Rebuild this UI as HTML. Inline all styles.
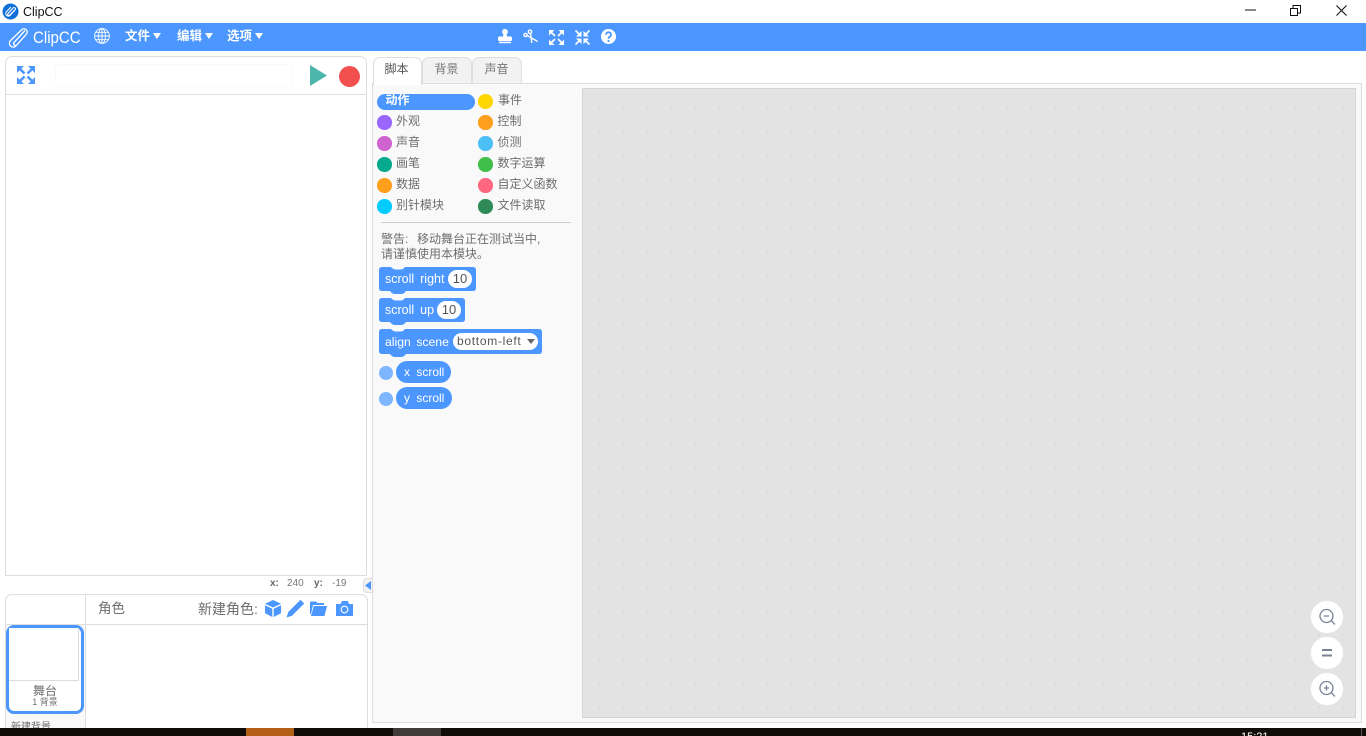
<!DOCTYPE html>
<html lang="zh"><head><meta charset="utf-8"><title>ClipCC</title>
<style>
html,body{margin:0;padding:0;width:1366px;height:736px;overflow:hidden;background:#fff}
body{position:relative;font-family:"Liberation Sans","Noto Sans CJK SC",sans-serif;font-size:12px;color:#6e6e6e}
.a{position:absolute;box-sizing:border-box}
.t{position:absolute;white-space:nowrap;line-height:16px}
.c{position:absolute;width:14.500px;height:14.500px;border-radius:50%}
svg{position:absolute;overflow:visible}
.m{position:absolute;top:28px;color:#fff;font-size:12.500px;font-weight:bold;line-height:16px;white-space:nowrap}
.ar{display:inline-block;width:0;height:0;border-left:4.500px solid transparent;border-right:4.500px solid transparent;border-top:6px solid #fff;margin-left:3px;vertical-align:1px}
.tab{position:absolute;box-sizing:border-box;top:57px;height:26px;width:50px;border:1px solid #ddd;border-bottom:none;border-radius:7px 7px 0 0;background:#f2f2f2;text-align:center;line-height:22px;color:#777;padding-right:1px}
</style></head><body>

<!-- title bar -->
<svg style="left:2px;top:3px" width="17" height="17" viewBox="0 0 17 17"><circle cx="8.500" cy="8.500" r="8" fill="#0f6fd8"/><path d="M11.500 4.500L6 10.500a1.200 1.200 0 0 0 1.700 1.700L12.700 7" fill="none" stroke="#fff" stroke-width="1.100"/><path d="M11.500 4.500a1.700 1.700 0 0 1 2 2L8 12.500a2.600 2.600 0 0 1-3.800-3.500L9 4" fill="none" stroke="#fff" stroke-width="1"/></svg>
<div class="t" style="left:23px;top:4px;color:#111;font-size:12.500px">ClipCC</div>
<svg style="left:1245px;top:9px" width="12" height="2"><path d="M0 1H11" stroke="#111" stroke-width="1"/></svg>
<svg style="left:1290px;top:5px" width="11" height="11"><path d="M.5 3.500H7.500V10.500H.5ZM3 3.500V.5H10.500V8H7.500" fill="none" stroke="#111" stroke-width="1"/></svg>
<svg style="left:1336px;top:5px" width="11" height="11"><path d="M.5 .5L10.500 10.500M10.500 .5L.5 10.500" stroke="#111" stroke-width="1.100"/></svg>

<!-- menu bar -->
<div class="a" style="left:0;top:23px;width:1366px;height:28px;background:#4c97ff"></div>
<svg style="left:8px;top:27px" width="20" height="22" viewBox="0 0 20 22"><path d="M17 3.500L6 15.500a1.900 1.900 0 0 0 2.700 2.600L18.500 7a3.200 3.200 0 0 0-4.500-4.500L2.500 13.500a3.800 3.800 0 0 0 5.500 5.500" fill="none" stroke="#fff" stroke-width="1.300"/></svg>
<div class="t" style="left:33px;top:27px;color:#fff;font-size:17px;line-height:22px;transform:scaleX(.885);transform-origin:left center">ClipCC</div>
<svg style="left:94px;top:28px" width="16" height="16" viewBox="0 0 16 16" fill="none" stroke="#fff" stroke-width=".9"><circle cx="8" cy="8" r="7.400"/><ellipse cx="8" cy="8" rx="3.400" ry="7.400"/><path d="M8 .6V15.400M.6 8H15.400M1.700 4.300H14.300M1.700 11.700H14.300"/></svg>
<div class="m" style="left:125px">文件<span class="ar"></span></div>
<div class="m" style="left:177px">编辑<span class="ar"></span></div>
<div class="m" style="left:227px">选项<span class="ar"></span></div>

<!-- toolbar icons -->
<svg style="left:497px;top:28px" width="16" height="16" viewBox="0 0 16 16" fill="#fff"><circle cx="8" cy="3.800" r="2.900"/><path d="M6.500 5.500h3l.6 3.500H5.900z"/><rect x="1" y="8.500" width="14" height="4.600" rx="1.500"/><rect x="2" y="13.800" width="12" height="1.400"/></svg>
<svg style="left:523px;top:29px" width="16" height="15" viewBox="0 0 16 15" fill="none" stroke="#fff" stroke-width="1.400"><circle cx="2.600" cy="6" r="1.600"/><circle cx="7" cy="2.800" r="1.700"/><path d="M4.300 6.500L14.600 12.500M7.600 4.800L8.800 14"/></svg>
<svg style="left:549px;top:29.500px" width="15" height="15" viewBox="0 0 15 15"><g fill="#fff"><path d="M0 0H5.500L0 5.500ZM15 0V5.500L9.500 0ZM0 15V9.500L5.500 15ZM15 15H9.500L15 9.500Z"/></g><path d="M2 2L6 6M13 2L9 6M2 13L6 9M13 13L9 9" stroke="#fff" stroke-width="1.600"/></svg>
<svg style="left:575px;top:29.500px" width="15" height="15" viewBox="0 0 15 15"><g fill="#fff"><path d="M6.500 6.500H1L6.500 1ZM8.500 6.500V1L14 6.500ZM6.500 8.500V14L1 8.500ZM8.500 8.500H14L8.500 14Z"/></g><path d="M.5 .5L4 4M14.500 .5L11 4M.5 14.500L4 11M14.500 14.500L11 11" stroke="#fff" stroke-width="1.600"/></svg>
<svg style="left:601px;top:29px" width="15" height="15" viewBox="0 0 15 15"><circle cx="7.500" cy="7.500" r="7.500" fill="#fff"/><path d="M5 5.600a2.500 2.400 0 1 1 3.800 2.100c-.9.500-1.300 1-1.300 2" fill="none" stroke="#4c97ff" stroke-width="1.800"/><circle cx="7.500" cy="12" r="1.100" fill="#4c97ff"/></svg>

<!-- stage panel -->
<div class="a" style="left:5px;top:56px;width:362px;height:520px;border:1px solid #ddd;border-radius:7px 7px 0 0;background:#fff"></div>
<div class="a" style="left:6px;top:94px;width:360px;height:1px;background:#ddd"></div>
<div class="a" style="left:55px;top:64px;width:238px;height:23px;border:1px solid #fafafe;border-radius:4px"></div>
<svg style="left:17px;top:66px" width="18" height="18" viewBox="0 0 18 18"><g fill="#4c97ff"><path d="M0 0H7L0 7ZM18 0V7L11 0ZM0 18V11L7 18ZM18 18H11L18 11Z"/></g><path d="M2 2L7.500 7.500M16 2L10.500 7.500M2 16L7.500 10.500M16 16L10.500 10.500" stroke="#4c97ff" stroke-width="2.600"/></svg>
<svg style="left:310px;top:65px" width="17" height="21"><path d="M0 0L17 10.500 0 21Z" fill="#4db6ac"/></svg>
<div class="a" style="left:339px;top:66px;width:21px;height:21px;border-radius:50%;background:#f25050"></div>

<!-- coords -->
<div class="t" style="left:270px;top:576px;font-size:10px;font-weight:bold;color:#666">x:</div>
<div class="t" style="left:287px;top:576px;font-size:10px;color:#777">240</div>
<div class="t" style="left:314px;top:576px;font-size:10px;font-weight:bold;color:#666">y:</div>
<div class="t" style="left:332px;top:576px;font-size:10px;color:#777">-19</div>
<div class="a" style="left:363px;top:578px;width:10px;height:15px;background:#f2f2f2;border:1px solid #ddd;border-right:none;border-radius:4px 0 0 4px"></div>
<svg style="left:365px;top:581px" width="6" height="9"><path d="M0 4.500L6 0V9Z" fill="#4c97ff"/></svg>

<!-- sprite panel -->
<div class="a" style="left:5px;top:594px;width:363px;height:140px;border:1px solid #ddd;border-radius:7px 7px 0 0;background:#fff"></div>
<div class="a" style="left:6px;top:625px;width:79px;height:103px;background:#f9f9f9"></div>
<div class="a" style="left:85px;top:595px;width:1px;height:133px;background:#ddd"></div>
<div class="a" style="left:6px;top:624px;width:361px;height:1px;background:#ddd"></div>
<div class="t" style="left:98px;top:601px;font-size:13.500px">角色</div>
<div class="t" style="left:198px;top:601px;font-size:14px">新建角色:</div>
<svg style="left:265px;top:600px" width="16" height="17" viewBox="0 0 16 17" fill="#4c97ff"><path d="M8 0L16 3.800 8 7.500 0 3.800Z"/><path d="M0 5.200L7.300 8.700V17L0 13.200ZM16 5.200L8.700 8.700V17L16 13.200Z"/></svg>
<svg style="left:286px;top:599px" width="19" height="19" viewBox="0 0 19 19" fill="#4c97ff"><path d="M14.500 .8L18.200 4.500 6 16.700 .5 18.500 2.300 13Z"/></svg>
<svg style="left:310px;top:601px" width="17" height="15" viewBox="0 0 17 15" fill="#4c97ff"><path d="M0 1.500Q0 .5 1 .5H6L7.500 2H14V4H3L1 13 0 13Z"/><path d="M3.800 5H17L14.500 15H1Z"/></svg>
<svg style="left:336px;top:601px" width="17" height="15" viewBox="0 0 17 15"><path d="M0 3H4.500L6 0H12L13 3H17V15H0Z" fill="#4c97ff"/><circle cx="8.500" cy="8.500" r="3.300" fill="none" stroke="#fff" stroke-width="1.100"/></svg>
<div class="a" style="left:6px;top:625px;width:78px;height:89px;border:3px solid #4c97ff;border-radius:8px;background:#fff"></div>
<div class="a" style="left:9px;top:628px;width:70px;height:53px;border:1px solid #ddd;border-top:none;border-left:none;background:#fff"></div>
<div class="t" style="left:6px;top:683px;width:78px;text-align:center;font-size:12px">舞台</div>
<div class="t" style="left:6px;top:696px;width:78px;text-align:center;font-size:9px;line-height:13px">1 背景</div>
<div class="t" style="left:11px;top:720px;font-size:10px">新建背景</div>

<!-- tabs -->
<div class="tab" style="left:422px">背景</div>
<div class="tab" style="left:472px">声音</div>
<div class="a" style="left:372px;top:83px;width:990px;height:640px;border:1px solid #ddd;background:#f9f9f9"></div>
<div class="tab" style="left:373px;width:49px;height:28px;background:#fff;color:#555;z-index:2;padding-right:2px">脚本</div>

<!-- palette -->
<div class="a" style="left:377px;top:94px;width:98px;height:16px;border-radius:8px;background:#4c97ff"></div>
<div class="t" style="left:385.500px;top:92px;color:#fff;font-weight:bold">动作</div>
<div class="c" style="left:377px;top:115px;background:#9966ff"></div><div class="t" style="left:396px;top:113px">外观</div>
<div class="c" style="left:377px;top:136px;background:#cf63cf"></div><div class="t" style="left:396px;top:134px">声音</div>
<div class="c" style="left:377px;top:157px;background:#05a98d"></div><div class="t" style="left:396px;top:155px">画笔</div>
<div class="c" style="left:377px;top:178px;background:#ff9f1c"></div><div class="t" style="left:396px;top:176px">数据</div>
<div class="c" style="left:377px;top:199px;background:#00ccff"></div><div class="t" style="left:396px;top:197px">别针模块</div>
<div class="c" style="left:478px;top:94px;background:#ffd500"></div><div class="t" style="left:498px;top:92px">事件</div>
<div class="c" style="left:478px;top:115px;background:#ff9f1c"></div><div class="t" style="left:497.500px;top:113px">控制</div>
<div class="c" style="left:478px;top:136px;background:#4cbff5"></div><div class="t" style="left:497.500px;top:134px">侦测</div>
<div class="c" style="left:478px;top:157px;background:#40bf4a"></div><div class="t" style="left:497.500px;top:155px">数字运算</div>
<div class="c" style="left:478px;top:178px;background:#ff6680"></div><div class="t" style="left:497.500px;top:176px">自定义函数</div>
<div class="c" style="left:478px;top:199px;background:#2e8b57"></div><div class="t" style="left:497.500px;top:197px">文件读取</div>
<div class="a" style="left:381px;top:222px;width:190px;height:1px;background:#ccc"></div>
<div class="t" style="left:381px;top:232px;line-height:15px;white-space:normal;width:195px">警告:&nbsp; <span style="margin-left:2px">移动舞台正在测试当中,</span><br>请谨慎使用本模块。</div>

<!-- blocks -->
<svg style="left:0;top:0" width="1366" height="736">
<g fill="#4c97ff">
<path d="M382 267H391Q393 269.500 396 269.500H401Q403 269.500 405 267H473Q476 267 476 270V288Q476 291 473 291H406Q404 294 401 294H395Q392 294 390 291H382Q379 291 379 288V270Q379 267 382 267Z"/>
<path d="M382 298H391Q393 300.500 396 300.500H401Q403 300.500 405 298H462Q465 298 465 301V319Q465 322 462 322H406Q404 325 401 325H395Q392 325 390 322H382Q379 322 379 319V301Q379 298 382 298Z"/>
<path d="M382 329H391Q393 331.500 396 331.500H401Q403 331.500 405 329H539Q542 329 542 332V351Q542 354 539 354H406Q404 357 401 357H395Q392 357 390 354H382Q379 354 379 351V332Q379 329 382 329Z"/>
<rect x="396" y="361" width="55" height="22" rx="11"/>
<rect x="396" y="387" width="56" height="22" rx="11"/>
</g>
<circle cx="386" cy="373" r="7" fill="#7eb6ff"/>
<circle cx="386" cy="399" r="7" fill="#7eb6ff"/>
<g fill="#fff"><rect x="448" y="270" width="24" height="18" rx="9"/><rect x="437" y="301" width="24" height="18" rx="9"/><rect x="453" y="333" width="85" height="17" rx="8.500"/></g>
<path d="M527 339H535L531 344Z" fill="#666"/>
</svg>
<div class="t" style="left:385px;top:271px;color:#fff;font-size:12.500px;word-spacing:2.500px">scroll right</div>
<div class="t" style="left:448px;top:271px;width:24px;text-align:center;color:#555;font-size:13px">10</div>
<div class="t" style="left:385px;top:302px;color:#fff;font-size:12.500px;word-spacing:2.500px">scroll up</div>
<div class="t" style="left:437px;top:302px;width:24px;text-align:center;color:#555;font-size:13px">10</div>
<div class="t" style="left:385px;top:334px;color:#fff;font-size:12.200px;word-spacing:2.200px">align scene</div>
<div class="t" style="left:457px;top:333px;color:#555;letter-spacing:.7px">bottom-left</div>
<div class="t" style="left:404px;top:364px;color:#fff;word-spacing:3px">x scroll</div>
<div class="t" style="left:404px;top:390px;color:#fff;word-spacing:3px">y scroll</div>

<!-- scripting area -->
<div class="a" style="left:582px;top:88px;width:774px;height:630px;border:1px solid #d4d4d4;background-color:#e3e3e3;background-image:radial-gradient(circle,#dadada 1px,transparent 1.300px);background-size:24px 24px;background-position:4px 6px"></div>
<svg style="left:1310px;top:600px" width="34" height="106" viewBox="0 0 34 106">
<g fill="#fff" stroke="#e6e6e6" stroke-width="1"><circle cx="17" cy="17" r="16.500"/><circle cx="17" cy="53" r="16.500"/><circle cx="17" cy="89" r="16.500"/></g>
<g fill="none" stroke="#7a8395" stroke-width="1.300"><circle cx="16.500" cy="16" r="6.500"/><path d="M21.500 21L25 24.500M13.800 16H19.200"/><circle cx="16.500" cy="88" r="6.500"/><path d="M21.500 93L25 96.500M13.800 88H19.200M16.500 85.300V90.700"/></g>
<path d="M12 50H22M12 55.500H22" stroke="#7a8395" stroke-width="2"/>
</svg>

<!-- taskbar -->
<div class="a" style="left:0;top:728px;width:1366px;height:8px;background:#100c08;overflow:hidden">
<div class="a" style="left:246px;top:0;width:48px;height:8px;background:#b45f17"></div>
<div class="a" style="left:393px;top:0;width:48px;height:8px;background:#403a38"></div>
<div class="t" style="left:1241px;top:3px;color:#fff;font-size:11px;line-height:13px">15:21</div>
<div class="a" style="left:1361px;top:0;width:1px;height:8px;background:#555"></div>
</div>
</body></html>
